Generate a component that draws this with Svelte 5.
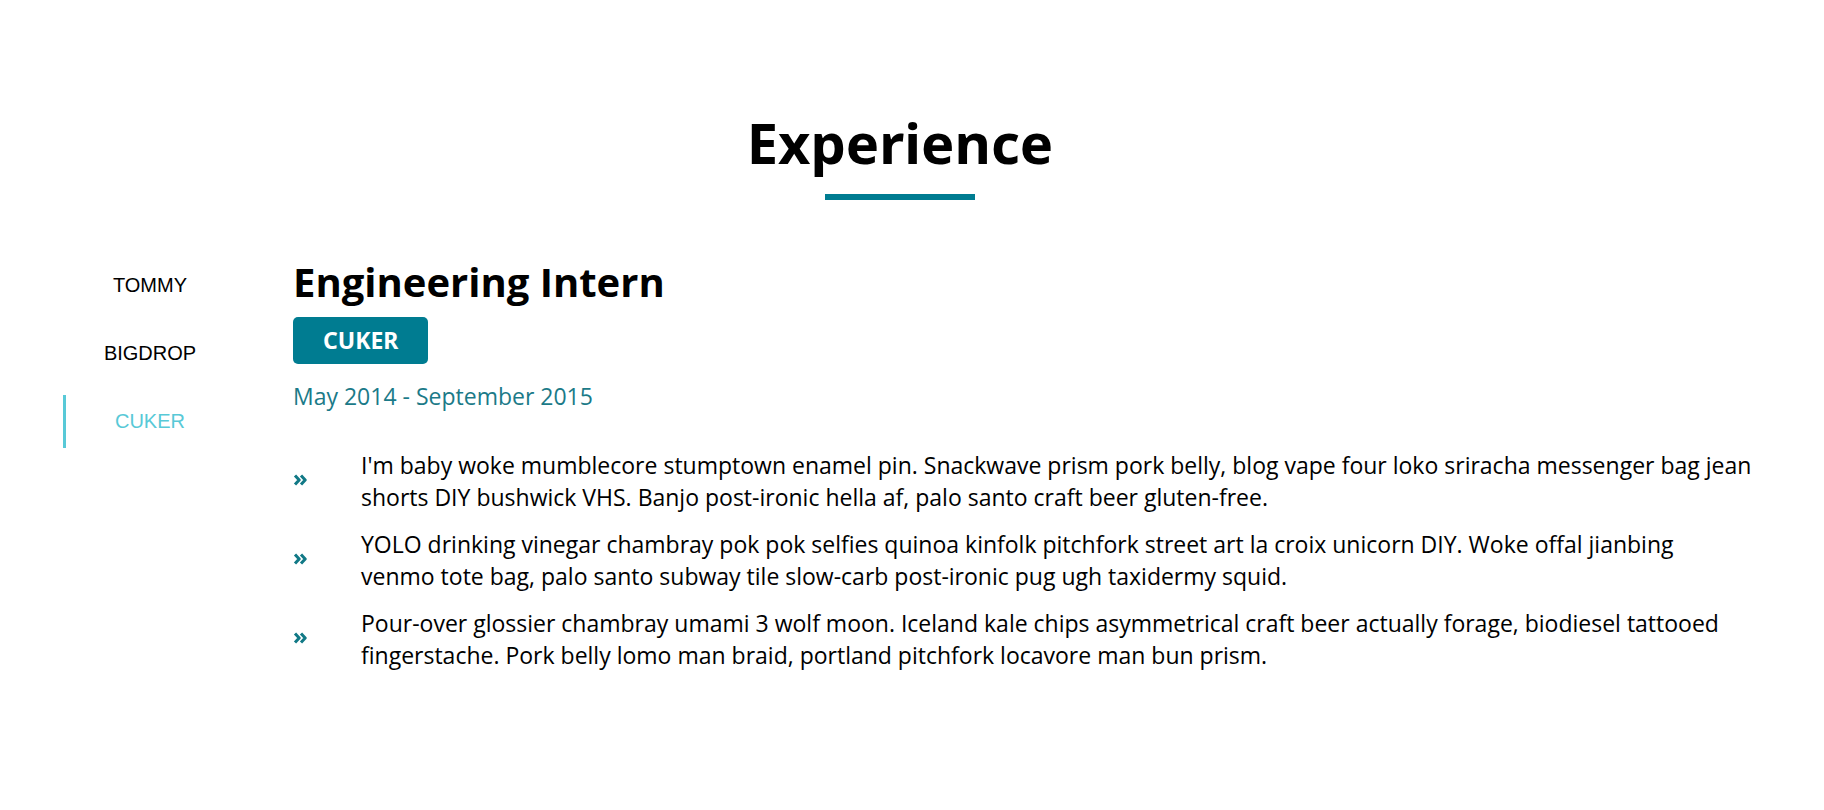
<script>
  const jobs = [
    {
      company: 'TOMMY',
      title: 'Full Stack Web Developer',
      dates: 'December 2015 - Present',
      duties: []
    },
    {
      company: 'BIGDROP',
      title: 'Front-End Engineer',
      dates: 'May 2015 - December 2015',
      duties: []
    },
    {
      company: 'CUKER',
      title: 'Engineering Intern',
      dates: 'May 2014 - September 2015',
      duties: [
        "I'm baby woke mumblecore stumptown enamel pin. Snackwave prism pork belly, blog vape four loko sriracha messenger bag jean shorts DIY bushwick VHS. Banjo post-ironic hella af, palo santo craft beer gluten-free.",
        'YOLO drinking vinegar chambray pok pok selfies quinoa kinfolk pitchfork street art la croix unicorn DIY. Woke offal jianbing venmo\u00a0tote\u00a0bag, palo santo subway tile slow-carb post-ironic pug ugh taxidermy squid.',
        'Pour-over glossier chambray umami 3 wolf moon. Iceland kale chips asymmetrical craft beer actually forage, biodiesel tattooed fingerstache. Pork belly lomo man braid, portland pitchfork locavore man bun prism.'
      ]
    }
  ];
  let selected = $state(2);
  const job = $derived(jobs[selected]);
</script>

<section>
  <header>
    <h1>Experience</h1>
    <div class="underline"></div>
  </header>
  <div class="jobs">
    <nav aria-label="Companies">
      {#each jobs as item, i}
        <button type="button" class:active={i === selected} onclick={() => (selected = i)}>{item.company}</button>
      {/each}
    </nav>
    <article>
      <h2>{job.title}</h2>
      <h3>{job.company}</h3>
      <p class="dates">{job.dates}</p>
      <ul>
        {#each job.duties as duty}
          <li>
            <svg viewBox="0 0 14 12" aria-hidden="true">
              <path d="M2 1.4 6.2 6 2 10.6M8 1.4 12.2 6 8 10.6" />
            </svg>
            <p>{duty}</p>
          </li>
        {/each}
      </ul>
    </article>
  </div>
</section>

<style>
  :global(body) {
    margin: 0;
    background: #fff;
  }
  section {
    padding: 102px 0 96px;
    font-family: 'Segoe UI', 'Noto Sans', sans-serif;
    color: #000;
  }
  h1,
  h2,
  h3,
  p,
  ul {
    margin: 0;
    padding: 0;
  }
  header {
    display: flex;
    flex-direction: column;
    align-items: center;
    margin-bottom: 56px;
    padding: 0 84px 0 60px;
  }
  h1 {
    font-size: 56px;
    line-height: 80px;
    font-weight: 700;
  }
  .underline {
    width: 150px;
    height: 6px;
    margin-top: 12px;
    background: #007c91;
  }
  .jobs {
    display: grid;
    grid-template-columns: 174px minmax(0, 1fr);
    column-gap: 56px;
    padding: 0 63px;
  }
  nav {
    display: flex;
    flex-direction: column;
    gap: 15px;
    padding-top: 3px;
  }
  button {
    height: 53px;
    padding: 0;
    border: 0;
    background: transparent;
    font-family: 'Liberation Sans', Arial, sans-serif;
    font-size: 20px;
    color: #000;
    cursor: pointer;
  }
  button.active {
    color: #58c9d7;
    box-shadow: inset 3px 0 #58c9d7;
  }
  h2 {
    font-family: 'Segoe UI', 'Open Sans', sans-serif;
    font-size: 40px;
    line-height: 52px;
    font-weight: 700;
  }
  h3 {
    width: fit-content;
    margin-top: 9px;
    padding: 0 30px;
    border-radius: 5px;
    background: #007c91;
    color: #fff;
    font-size: 23px;
    line-height: 47px;
    font-weight: 700;
  }
  .dates,
  li {
    font-family: 'Segoe UI', 'Open Sans', sans-serif;
    font-size: 23px;
    line-height: 32px;
  }
  .dates {
    margin-top: 16px;
    color: #1b7a88;
  }
  ul {
    display: grid;
    gap: 15px;
    margin-top: 37px;
    list-style: none;
  }
  li {
    display: grid;
    grid-template-columns: 14px minmax(0, 1fr);
    align-items: center;
    column-gap: 54px;
  }
  svg {
    width: 14px;
    height: 12px;
    margin-top: -3px;
    fill: none;
    stroke: #117986;
    stroke-width: 3;
    stroke-linejoin: round;
  }
</style>
